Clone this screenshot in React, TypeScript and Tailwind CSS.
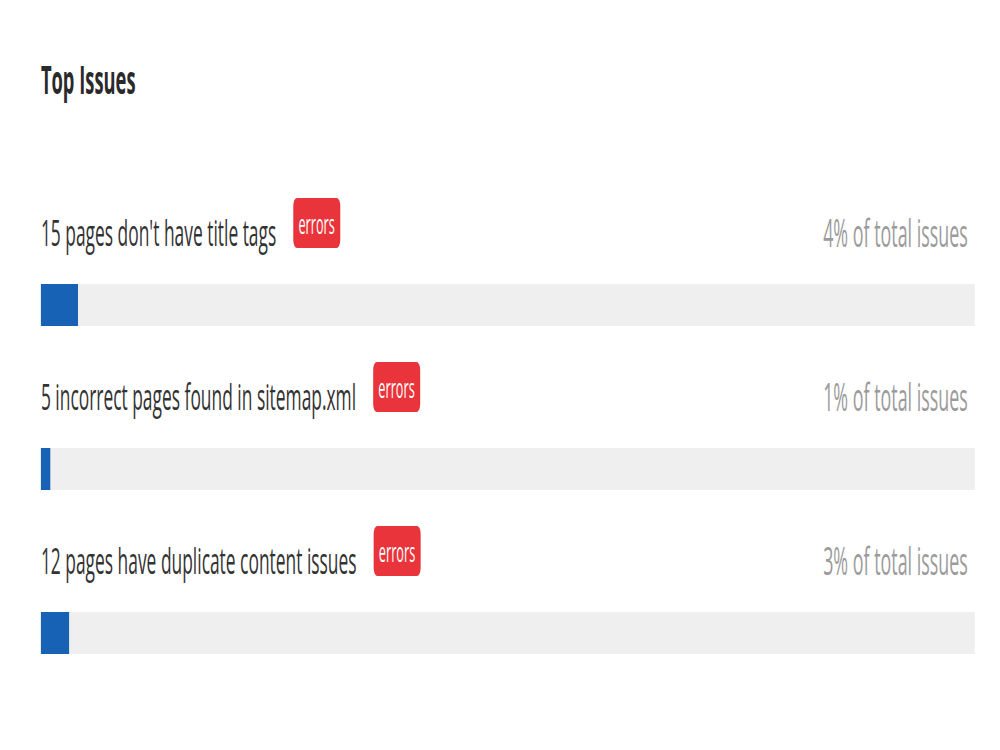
import React from 'react';

type Issue = {
  label: string;
  percent: number;
};

const issues: Issue[] = [
  { label: "15 pages don't have title tags", percent: 4 },
  { label: '5 incorrect pages found in sitemap.xml', percent: 1 },
  { label: '12 pages have duplicate content issues', percent: 3 },
];

const IssueRow: React.FC<{ issue: Issue }> = ({ issue }) => (
  <div className="mb-[36px]">
    <div className="flex items-start justify-between">
      <div className="flex items-start">
        <span className="pt-[10px] text-[37px] leading-[48px] text-[#333333]">{issue.label}</span>
        <span className="ml-[36px] flex h-[50px] w-[100px] items-center justify-center rounded-[8px] bg-[#e8343a] text-[27px] font-medium leading-none text-white">
          errors
        </span>
      </div>
      <span className="pr-[15px] pt-[10px] text-[38px] leading-[48px] text-[#9b9b9b]">
        {issue.percent}% of total issues
      </span>
    </div>
    <div className="mt-[28px] h-[42px] w-full bg-[#efefef]">
      <div className="h-full bg-[#1862b5]" style={{ width: `${issue.percent}%` }} />
    </div>
  </div>
);

const App: React.FC = () => {
  return (
    <div className="h-[750px] w-[1000px] overflow-hidden bg-white font-['Open_Sans',sans-serif]">
      {/* Content is drawn wide and condensed horizontally */}
      <div className="w-[2128px] origin-top-left scale-x-[0.47] pl-[87px] pr-[54px] pt-[55px]">
        <h2 className="text-[39px] font-bold leading-[48px] text-[#2a2a2a]">Top Issues</h2>

        <div className="mt-[95px]">
          {issues.map((issue) => (
            <IssueRow key={issue.label} issue={issue} />
          ))}
        </div>
      </div>
    </div>
  );
};

export default App;
